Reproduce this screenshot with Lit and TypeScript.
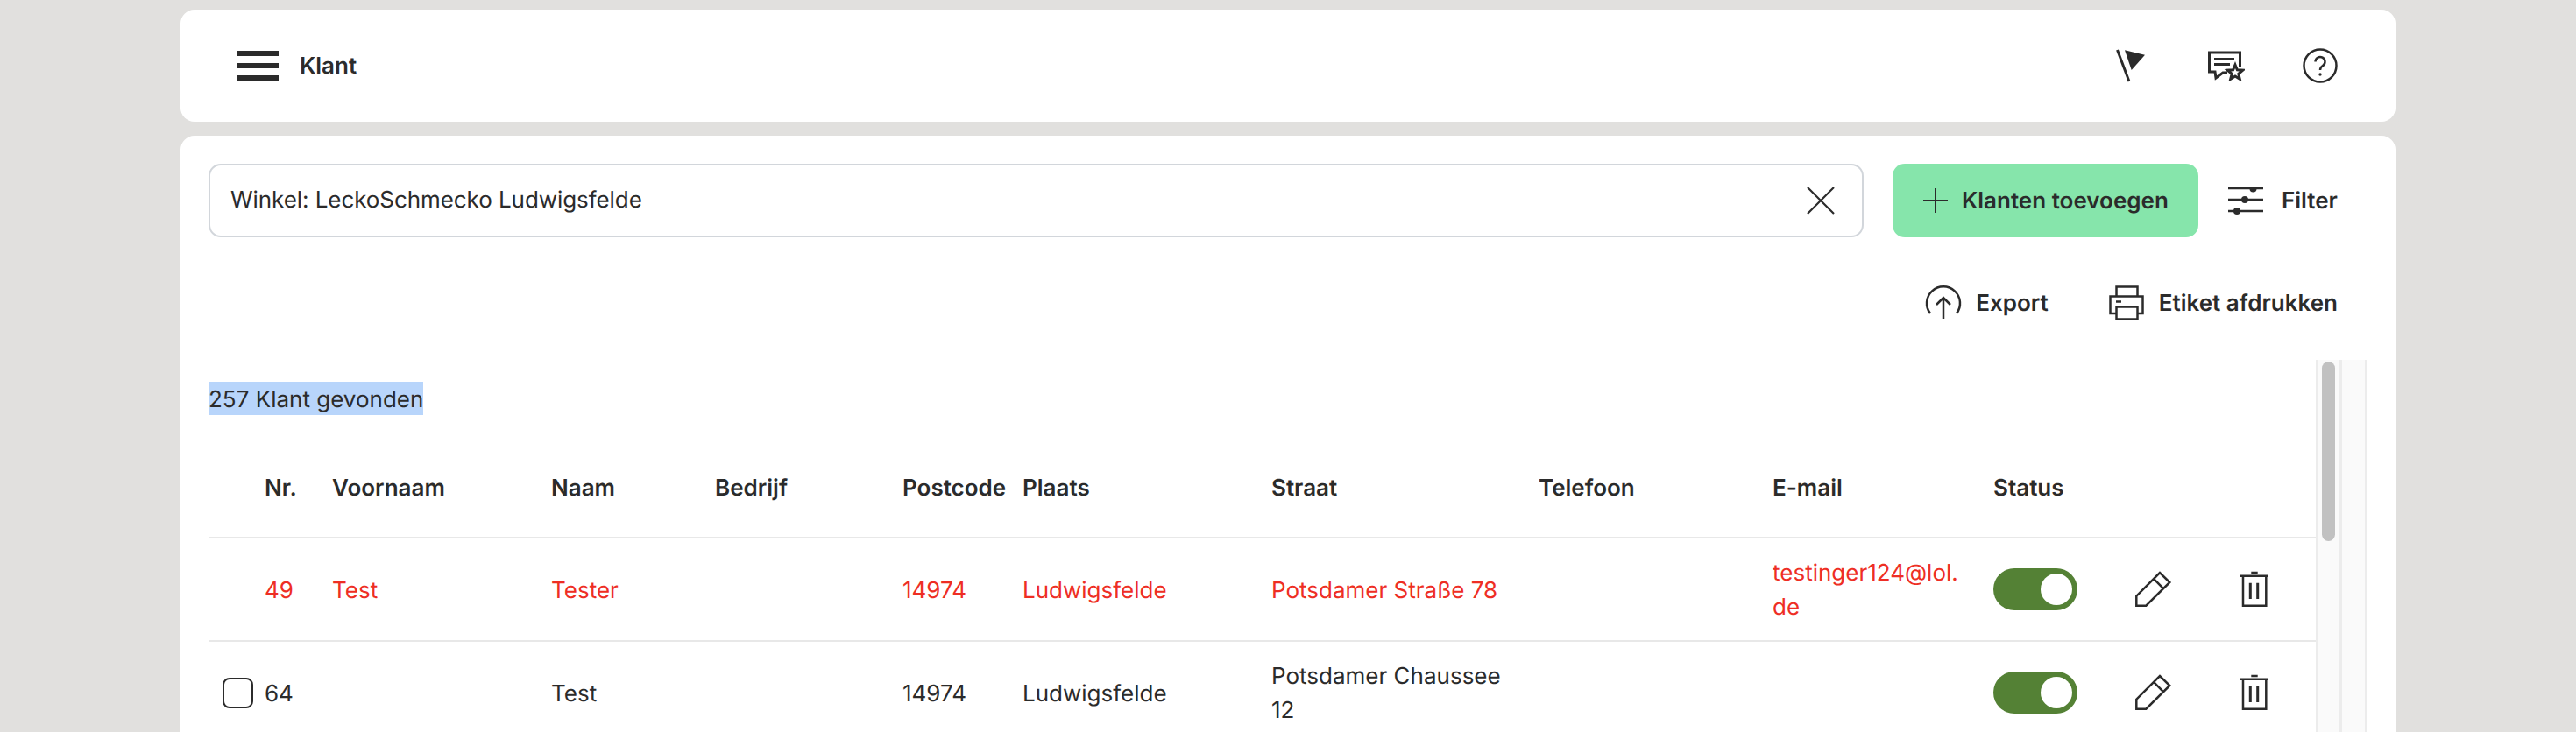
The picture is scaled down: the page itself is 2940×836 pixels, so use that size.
import { LitElement, html, css } from "lit";
import { customElement } from "lit/decorators.js";

const ink = "#2b2b2b";

const flag = html`<svg width="36" height="40" viewBox="0 0 36 40"><path d="M2.5 2 16 38" fill="none" stroke="${ink}" stroke-width="3"/><path d="M11 2.3 34 7.7 18.7 25Z" fill="${ink}"/></svg>`;
const chat = html`<svg width="42" height="34" viewBox="0 0 42 34"><path d="M36.5 19V2H1.5V24H8L9 31 17 25H22" fill="none" stroke="${ink}" stroke-width="3"/><path d="M7 9.5H30M7 15.5H25" fill="none" stroke="${ink}" stroke-width="3"/><path d="M31 16 33.35 21.76 39.6 22.2 34.8 26.24 36.3 32.3 31 29 25.7 32.3 27.2 26.24 22.4 22.2 28.65 21.76Z" fill="#fff" stroke="${ink}" stroke-width="3"/></svg>`;
const help = html`<svg width="42" height="42" viewBox="-21 -21 42 42"><circle r="18.5" fill="none" stroke="${ink}" stroke-width="2.5"/><path d="M-5.5-4.5a5.5 5.5 0 1 1 8.5 4.6c-2 1.4-3 2.5-3 4.9" fill="none" stroke="${ink}" stroke-width="2.5"/><circle cy="10" r="1.7" fill="${ink}"/></svg>`;
const cross = html`<svg width="34" height="34" viewBox="0 0 34 34"><path d="M2 2 32 32M32 2 2 32" fill="none" stroke="${ink}" stroke-width="2.2"/></svg>`;
const plus = html`<svg width="30" height="30" viewBox="0 0 30 30"><path d="M15 1V29M1 15H29" fill="none" stroke="${ink}" stroke-width="2"/></svg>`;
const filter = html`<svg width="42" height="32" viewBox="0 0 42 32"><path d="M1 2H41M1 15H41M1 28H41" fill="none" stroke="${ink}" stroke-width="2.5"/><circle cx="29.5" cy="2.5" r="4" fill="${ink}"/><circle cx="20" cy="15" r="4" fill="${ink}"/><circle cx="11" cy="28" r="4" fill="${ink}"/></svg>`;
const exportIcon = html`<svg width="42" height="42" viewBox="0 0 42 42"><path d="M6 33A19 19 0 1 1 36 33" fill="none" stroke="${ink}" stroke-width="2.5"/><path d="M21 39V15M13 23l8-8 8 8" fill="none" stroke="${ink}" stroke-width="2.5"/></svg>`;
const printer = html`<svg width="42" height="42" viewBox="0 0 42 42"><path d="M9 33H2.5V13.5H39.5V33H33M9.5 13V2.5H33.5V13" fill="none" stroke="${ink}" stroke-width="2.5"/><rect x="9.5" y="25.5" width="24" height="14" fill="none" stroke="${ink}" stroke-width="2.5"/><path d="M9 19.5h6" stroke="${ink}" stroke-width="2.5"/></svg>`;
const pencil = html`<svg width="42" height="42" viewBox="0 0 42 42"><path d="M1.3 39.7V28.7L28 2 39.3 13 12.3 39.7ZM20.7 8.7 32.3 20.3" fill="none" stroke="${ink}" stroke-width="2.5"/></svg>`;
const trash = html`<svg width="34" height="42" viewBox="0 0 34 42"><path d="M.7 5.7H33M13.3 2H20.7M4 5.7V39.7H30.3V5.7" fill="none" stroke="${ink}" stroke-width="2.5"/><path d="M12.3 13.7V32M20.7 13.7V32" fill="none" stroke="${ink}" stroke-width="3"/></svg>`;

const headers = ["", "Nr.", "Voornaam", "Naam", "Bedrijf", "Postcode", "Plaats", "Straat", "Telefoon", "E-mail", "Status", "", ""];

const rows = [
  { red: true, check: false, nr: "49", first: "Test", last: "Tester", plz: "14974", city: "Ludwigsfelde", street: "Potsdamer Straße 78", mail: true },
  { red: false, check: true, nr: "64", first: "", last: "Test", plz: "14974", city: "Ludwigsfelde", street: "Potsdamer Chaussee 12", mail: false },
];

@customElement("app-root")
export class AppRoot extends LitElement {
  static styles = css`
    :host {
      display: flex;
      flex-direction: column;
      height: 836px;
      overflow: hidden;
      box-sizing: border-box;
      padding: 11px 206px 0;
      gap: 16px;
      background: #e1e0de;
      color: #2b2b2b;
      font-family: Inter, "Liberation Sans", sans-serif;
      font-size: 26px;
      line-height: 38px;
      text-rendering: geometricPrecision;
    }
    .card { background: #fff; border-radius: 16px; }
    .top {
      flex: none;
      height: 128px;
      display: flex;
      align-items: center;
      padding: 0 65px 0 64px;
    }
    .burger { width: 48px; height: 34px; display: flex; flex-direction: column; justify-content: space-between; margin-right: 25px; }
    .burger i { display: block; height: 6px; background: #2b2b2b; }
    .strong { font-weight: 600; }
    .title { padding-top: 2px; margin-left: -1px; }
    .top-icons { margin-left: auto; display: flex; align-items: center; }
    .top-icons svg { display: block; }
    .ic-flag { margin-right: 70px; }
    .ic-chat { margin-right: 65px; }
    .main { flex: 1; min-height: 0; padding: 32px 33px 0 32px; display: flex; flex-direction: column; border-radius: 16px 16px 0 0; }
    .tools { flex: none; display: flex; align-items: center; }
    .search {
      flex: none;
      width: 1889px;
      height: 84px;
      box-sizing: border-box;
      border: 2px solid #d2d6db;
      border-radius: 14px;
      display: flex;
      align-items: center;
      justify-content: space-between;
      padding: 0 30px 0 23px;
    }
    .search svg { display: block; }
    .search span { letter-spacing: -0.07px; }
    .add {
      flex: none;
      width: 349px;
      height: 84px;
      box-sizing: border-box;
      margin-left: 33px;
      padding-left: 34px;
      background: #86e5ab;
      border-radius: 14px;
      display: flex;
      align-items: center;
      gap: 15px;
    }
    .add span, .link span { padding-top: 2px; }
    .link { display: flex; align-items: center; gap: 16px; }
    .link svg, .add svg { display: block; flex: none; }
    .filter { margin-left: 33px; gap: 20px; }
    .tools2 { flex: none; display: flex; justify-content: flex-end; gap: 68px; margin-top: 54px; padding-right: 33px; height: 42px; }
    .area { flex: 1; min-height: 0; display: flex; margin-top: 44px; }
    .list { flex: 1; min-width: 0; padding-top: 25px; }
    .count { background: #b8d5fb; display: inline-block; vertical-align: top; height: 38px; line-height: 41px; }
    .row {
      display: grid;
      grid-template-columns: 64px 77px 250px 187px 214px 137px 284px 305px 267px 252px 162px 119px 1fr;
      align-items: center;
      box-sizing: border-box;
      height: 118px;
      border-bottom: 2px solid #e8e8e8;
    }
    .head { height: 115px; margin-top: 26px; font-weight: 600; }
    .cell { padding: 2px 30px 0 0; min-width: 0; line-height: 39px; }
    .red { color: #ee2e24; }
    .box { width: 35px; height: 35px; box-sizing: border-box; border: 2.5px solid #2b2b2b; border-radius: 8px; margin-left: 16px; }
    .toggle { width: 96px; height: 48px; border-radius: 24px; background: #548135; display: flex; justify-content: flex-end; align-items: center; padding-right: 6px; box-sizing: border-box; }
    .toggle i { display: block; width: 36px; height: 36px; border-radius: 50%; background: #fff; }
    .act svg { display: block; }
    .track { flex: none; width: 30px; box-sizing: border-box; background: #fafafa; border-left: 2px solid #ececec; border-right: 3px solid #ececec; padding: 2px 5px 0; }
    .thumb { height: 205px; border-radius: 8px; background: #c1c1c1; }
    .strip { flex: none; width: 28px; box-sizing: border-box; background: #fafafa; border-right: 2px solid #ececec; }
  `;

  render() {
    return html`
      <header class="card top">
        <div class="burger"><i></i><i></i><i></i></div>
        <span class="strong title">Klant</span>
        <div class="top-icons">
          <span class="ic-flag">${flag}</span>
          <span class="ic-chat">${chat}</span>
          <span>${help}</span>
        </div>
      </header>
      <section class="card main">
        <div class="tools">
          <div class="search"><span>Winkel: LeckoSchmecko Ludwigsfelde</span>${cross}</div>
          <div class="add strong">${plus}<span>Klanten toevoegen</span></div>
          <div class="link filter strong">${filter}<span>Filter</span></div>
        </div>
        <div class="tools2">
          <div class="link strong">${exportIcon}<span>Export</span></div>
          <div class="link strong">${printer}<span>Etiket afdrukken</span></div>
        </div>
        <div class="area">
          <div class="list">
            <div><span class="count">257 Klant gevonden</span></div>
            <div class="row head">${headers.map((h) => html`<div class="cell">${h}</div>`)}</div>
            ${rows.map(
              (r) => html`<div class="row ${r.red ? "red" : ""}">
                <div>${r.check ? html`<div class="box"></div>` : ""}</div>
                <div class="cell">${r.nr}</div>
                <div class="cell">${r.first}</div>
                <div class="cell">${r.last}</div>
                <div class="cell"></div>
                <div class="cell">${r.plz}</div>
                <div class="cell">${r.city}</div>
                <div class="cell">${r.street}</div>
                <div class="cell"></div>
                <div class="cell">${r.mail ? html`testinger124@lol.<wbr />de` : ""}</div>
                <div><div class="toggle"><i></i></div></div>
                <div class="act">${pencil}</div>
                <div class="act">${trash}</div>
              </div>`
            )}
          </div>
          <div class="track"><div class="thumb"></div></div>
          <div class="strip"></div>
        </div>
      </section>
    `;
  }
}
